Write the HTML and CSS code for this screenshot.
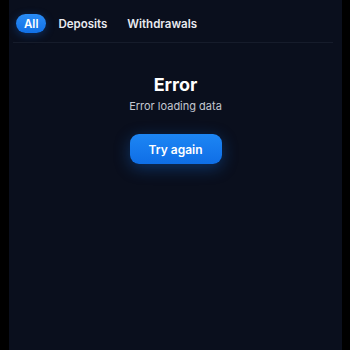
FILE: index.html
```html
<!DOCTYPE html>
<html>
<head>
<meta charset="utf-8">
<link rel="stylesheet" href="styles.css">
</head>
<body>
<div class="frame">
  <div class="screen">
    <div class="tabs">
      <span class="tab active">All</span>
      <span class="tab">Deposits</span>
      <span class="tab">Withdrawals</span>
    </div>
    <div class="divider"></div>
    <div class="error">
      <div class="title">Error</div>
      <div class="msg">Error loading data</div>
      <button class="retry">Try again</button>
    </div>
  </div>
</div>
</body>
</html>
```
FILE: styles.css
```css
html, body {
  margin: 0;
  padding: 0;
  width: 350px;
  height: 350px;
  background: #000;
  overflow: hidden;
}
.frame {
  display: flex;
  height: 350px;
  padding: 0 8px 0 9px;
  box-sizing: border-box;
}
.screen {
  flex: 1;
  background: #0a0f1d;
  font-family: Inter, "Noto Sans", sans-serif;
  color: #fff;
  display: flex;
  flex-direction: column;
}
.tabs {
  display: flex;
  align-items: center;
  gap: 4px;
  padding: 14px 0 0 7px;
}
.tab {
  font-size: 11.5px;
  font-weight: 600;
  color: #e8eaf0;
  padding: 1px 8px 0;
  line-height: 18px;
}
.tab.active {
  background: linear-gradient(180deg, #2a8cf5, #1170e6);
  color: #fff;
  border-radius: 10px;
  box-shadow: 0 2px 8px rgba(20, 110, 230, 0.35);
}
.divider {
  height: 1px;
  background: #161c2b;
  margin: 9px 9px 0 4px;
}
.error {
  display: flex;
  flex-direction: column;
  align-items: center;
  padding-top: 31px;
}
.title {
  font-size: 18px;
  font-weight: 700;
  line-height: 22px;
}
.msg {
  font-size: 11px;
  color: #c3c7d0;
  margin-top: 3px;
  line-height: 14px;
}
.retry {
  margin-top: 21px;
  width: 92px;
  height: 30px;
  border: none;
  border-radius: 9px;
  background: linear-gradient(180deg, #1d86f4, #0f6ee6);
  color: #fff;
  font-family: Inter, "Noto Sans", sans-serif;
  font-size: 12px;
  font-weight: 600;
  box-shadow: 0 4px 16px rgba(20, 120, 240, 0.35);
}
```
